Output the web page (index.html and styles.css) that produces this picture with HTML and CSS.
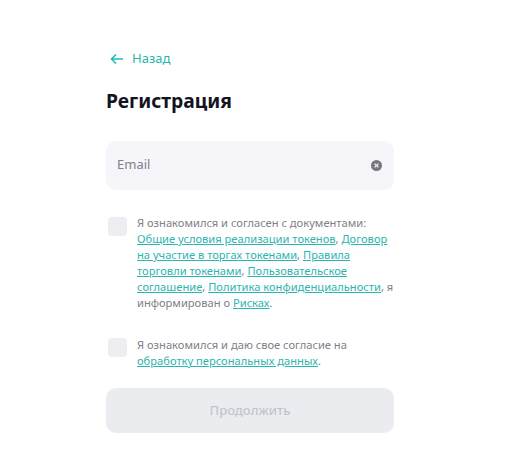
FILE: index.html
```html
<!DOCTYPE html>
<html lang="ru">

<head>
    <meta charset="UTF-8">
    <meta name="viewport" content="width=device-width, initial-scale=1.0">
    <title>Регистрация</title>
    <link rel="stylesheet" href="styles.css">
</head>

<body>

    <div id="main-content">
        <a class="back-link" href="#">
            <svg class="back-icon" width="14" height="12" viewBox="0 0 14 12" fill="none" stroke="#1fbdb4" stroke-width="1.6">
                <path d="M13 6H1.5M6 1.5L1.5 6L6 10.5" />
            </svg>
            Назад
        </a>

        <h1>Регистрация</h1>

        <div class="email-field">
            <span class="email-label">Email</span>
            <svg class="clear-icon" width="11" height="11" viewBox="0 0 11 11">
                <circle cx="5.5" cy="5.5" r="5.5" fill="#77777f" />
                <path d="M3.6 3.6L7.4 7.4M7.4 3.6L3.6 7.4" stroke="#f5f5fa" stroke-width="1.3" />
            </svg>
        </div>

        <!-- Agreements -->
        <div class="agree-row first-agree">
            <span class="checkbox"></span>
            <p>Я ознакомился и согласен с документами: <a href="#">Общие условия реализации токенов</a>, <a href="#">Договор на участие в торгах токенами</a>, <a href="#">Правила торговли токенами</a>, <a href="#">Пользовательское соглашение</a>, <a href="#">Политика конфиденциальности</a>, я информирован о <a href="#">Рисках</a>.</p>
        </div>

        <div class="agree-row second-agree">
            <span class="checkbox"></span>
            <p>Я ознакомился и даю свое согласие на <a href="#">обработку персональных данных</a>.</p>
        </div>

        <button class="submit-btn" disabled>Продолжить</button>
    </div>

</body>

</html>
```

FILE: styles.css
```css
body {
    margin: 0;
    background-color: #fff;
    font-family: "Noto Sans", "Open Sans", sans-serif;
}

#main-content {
    width: 288px;
    margin-left: 106px;
    padding-top: 50px;
}

.back-link {
    display: flex;
    align-items: center;
    gap: 8px;
    margin-left: 4px;
    height: 17px;
    font-size: 13px;
    line-height: 17px;
    color: #2bb5ad;
    text-decoration: none;
}

h1 {
    margin: 21px 0 0;
    font-size: 19.3px;
    line-height: 26px;
    font-weight: 700;
    color: #14141f;
}

/* Email input */
.email-field {
    display: flex;
    align-items: center;
    justify-content: space-between;
    box-sizing: border-box;
    height: 49px;
    margin-top: 27px;
    padding: 0 12px 0 11px;
    background-color: #f5f5fa;
    border-radius: 10px;
}

.email-label {
    position: relative;
    top: -2px;
    font-size: 13px;
    color: #808088;
}

.agree-row {
    display: flex;
    gap: 10px;
}

.first-agree {
    margin-top: 25px;
}

.second-agree {
    margin-top: 26px;
}

.checkbox {
    flex: none;
    width: 19px;
    height: 19px;
    margin: 2px 0 0 2px;
    background-color: #eeeef2;
    border-radius: 4px;
}

.agree-row p {
    margin: 0 -4px 0 0;
    font-size: 11.15px;
    line-height: 16px;
    color: #808088;
}

.agree-row a {
    color: #2bb5ad;
}

.second-agree .checkbox {
    margin-top: 1px;
}

.submit-btn {
    display: block;
    width: 288px;
    height: 45px;
    margin-top: 19px;
    padding: 0 0 2px;
    border: none;
    border-radius: 10px;
    background-color: #ebecf0;
    box-shadow: 0 7px 0 -6px #f8f8fa;
    font-family: inherit;
    font-size: 13px;
    font-weight: 500;
    color: #c4c4ca;
}
```
